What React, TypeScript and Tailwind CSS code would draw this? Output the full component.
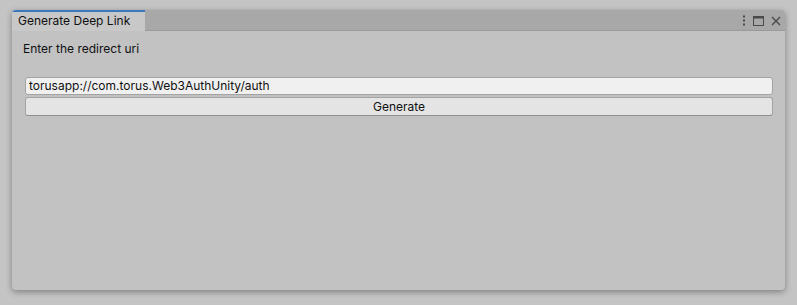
import React from "react";

function Kebab() {
  return (
    <svg width="4" height="11" viewBox="0 0 4 11" className="text-[#4a4a4a]">
      <rect x="1" y="0.5" width="2" height="2" fill="currentColor" />
      <rect x="1" y="4.5" width="2" height="2" fill="currentColor" />
      <rect x="1" y="8.5" width="2" height="2" fill="currentColor" />
    </svg>
  );
}

function Maximize() {
  return (
    <svg width="11" height="10" viewBox="0 0 11 10" className="text-[#4a4a4a]">
      <rect x="0.5" y="0.5" width="10" height="9" fill="none" stroke="currentColor" strokeWidth="1" />
      <rect x="0.5" y="0.5" width="10" height="2" fill="currentColor" />
    </svg>
  );
}

function Close() {
  return (
    <svg width="10" height="10" viewBox="0 0 10 10" className="text-[#4a4a4a]">
      <path d="M1 1 L9 9 M9 1 L1 9" stroke="currentColor" strokeWidth="1.4" />
    </svg>
  );
}

export default function App() {
  return (
    <div className="w-[797px] h-[305px] bg-[#c4c4c4] pt-[10px] pl-[12px] font-['Inter',sans-serif] text-[12px] text-[#101010]">
      <div className="w-[773px] h-[280px] flex flex-col rounded-[4px] overflow-hidden shadow-[0_2px_6px_rgba(0,0,0,0.35)] bg-[#c2c2c2]">
        {/* tab bar */}
        <div className="h-[21px] flex bg-[#a8a8a8] border-b border-[#9a9a9a]">
          <div className="w-[133px] h-[21px] bg-[#c8c8c8] border-t-2 border-[#3a79bb] flex items-center pl-[6px] pb-[1px] mb-[-1px]">
            Generate Deep Link
          </div>
          <div className="flex-1" />
          <div className="flex items-center gap-[7px] pr-[4px] pt-[1px]">
            <Kebab />
            <Maximize />
            <Close />
          </div>
        </div>
        {/* content */}
        <div className="flex-1 flex flex-col pl-[13px] pr-[12px] pt-[10px]">
          <div className="ml-[-2px] h-[16px] flex items-center">Enter the redirect uri</div>
          <div className="h-[20px]" />
          <div className="h-[18px] bg-[#f0f0f0] border border-[#a3a3a3] rounded-[3px] flex items-center px-[3px]">
            torusapp://com.torus.Web3AuthUnity/auth
          </div>
          <div className="h-[19px] mt-[2px] bg-[#e4e4e4] border border-[#a3a3a3] border-b-[#8f8f8f] rounded-[3px] flex items-center justify-center">
            Generate
          </div>
        </div>
      </div>
    </div>
  );
}
